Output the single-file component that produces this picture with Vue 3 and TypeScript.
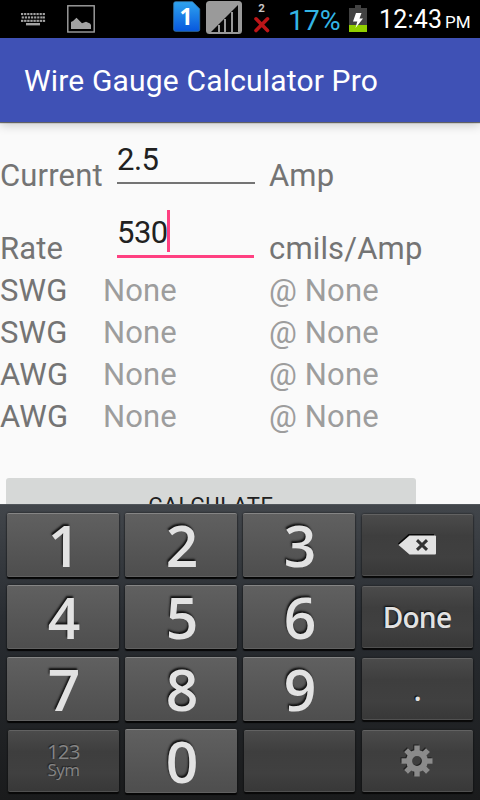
<script setup lang="ts">
import { ref } from 'vue'

interface Result { label: string; gauge: string; at: string }
interface Key { id: string; label?: string; kind: 'digit' | 'func' }

const current = ref('2.5')
const rate = ref('530')
const results: Result[] = [
  { label: 'SWG', gauge: 'None', at: '@ None' },
  { label: 'SWG', gauge: 'None', at: '@ None' },
  { label: 'AWG', gauge: 'None', at: '@ None' },
  { label: 'AWG', gauge: 'None', at: '@ None' },
]
const digit = (d: string): Key => ({ id: d, label: d, kind: 'digit' })
const func = (id: string): Key => ({ id, kind: 'func' })
const keys: Key[] = [
  digit('1'), digit('2'), digit('3'), func('delete'),
  digit('4'), digit('5'), digit('6'), func('done'),
  digit('7'), digit('8'), digit('9'), func('dot'),
  func('sym'), digit('0'), func('blank'), func('settings'),
]
const teeth = [0, 45, 90, 135, 180, 225, 270, 315]
const keyDots = [21.2, 24.3, 27.4, 30.5, 33.6, 36.7, 39.8, 42.9]
</script>

<template>
  <div class="screen">
    <header class="status">
      <svg class="status-icons" width="280" height="38" viewBox="0 0 280 38">
        <g fill="#a2a2a2">
          <template v-for="x in keyDots" :key="x">
            <rect :x="x - 0.2" y="13" width="2.2" height="2.1" />
            <rect :x="x + (x > 40 ? -0.2 : 0.5)" y="16.4" width="2.2" height="2.1" />
            <rect :x="x - 0.2" y="19.8" width="2.4" height="2.1" />
          </template>
          <rect x="26" y="23" width="14" height="2.4" />
        </g>
        <rect x="67.8" y="5.8" width="26.4" height="26.2" fill="none" stroke="#a2a2a2" stroke-width="1.4" />
        <path d="M71 29v-7l2-1 3.500-3.200 5.500 5.400 4-1.500 4 1.800 1 1.500v4z" fill="#a2a2a2" />
        <defs>
          <linearGradient id="sim" x1="0" y1="0" x2="0" y2="1">
            <stop offset="0" stop-color="#2fa4ee" /><stop offset="1" stop-color="#0757de" />
          </linearGradient>
        </defs>
        <path d="M175.500 1.700h17l7.200 7.200v20.600q0 1.800-1.800 1.800h-22.400q-1.800 0-1.800-1.800v-26q0-1.800 1.800-1.800z" fill="url(#sim)" stroke="#397bb0" stroke-width=".8" />
        <text x="179.400" y="24.600" class="sim-number">1</text>
        <rect x="206" y="1" width="36" height="33" rx="3.500" fill="#9a9a9a" />
        <path d="M211 32L238 5v27z" fill="#050505" />
        <path d="M219 25v7M225 19v13M232 12v20" stroke="#9a9a9a" stroke-width="2" />
        <text x="261.600" y="12" text-anchor="middle" class="signal-number">2</text>
        <path d="M256 18.800L267.500 30.500M267.500 18.800L256 30.500" stroke="#bc1518" stroke-width="3.600" stroke-linecap="round" />
      </svg>
      <span class="percent">17%</span>
      <svg class="battery" width="18" height="28" viewBox="0 0 18 28">
        <path d="M6 0h6v3h6v24H0V3h6z" fill="#424242" />
        <path d="M0 20h18v7H0z" fill="#91cf00" />
        <path d="M7 8h5.500l-2 5.500h3.500L6.500 23l1.800-6.500H4z" fill="#fff" />
      </svg>
      <span class="clock">12:43</span>
      <span class="meridiem">PM</span>
    </header>

    <div class="appbar"><h1>Wire Gauge Calculator Pro</h1></div>

    <main class="form">
      <div class="row field-row">
        <label>Current</label>
        <div class="field"><span>{{ current }}</span></div>
        <span>Amp</span>
      </div>
      <div class="row field-row rate">
        <label>Rate</label>
        <div class="field"><span>{{ rate }}</span><i class="caret"></i></div>
        <span>cmils/Amp</span>
      </div>
      <div v-for="(r, i) in results" :key="i" class="row">
        <span>{{ r.label }}</span>
        <span class="hint">{{ r.gauge }}</span>
        <span class="hint">{{ r.at }}</span>
      </div>
      <button class="calculate">CALCULATE</button>
    </main>

    <section class="keyboard">
      <div v-for="k in keys" :key="k.id" class="key" :class="[k.kind, 'key-' + k.id]">
        <span v-if="k.label">{{ k.label }}</span>
        <svg v-else-if="k.id === 'delete'" class="delete" width="42" height="26" viewBox="0 0 42 26">
          <path d="M2 11.500L12.500 2H38v2H13.500L3 13z" fill="#080808" />
          <path d="M2.500 13L13.500 3.500H39Q40 3.500 40 4.500V21.500Q40 22.500 39 22.500H13.500z" fill="#e2e2e2" />
          <path d="M21 8.200L31 17.800M31 8.200L21 17.800" stroke="#333" stroke-width="3" />
        </svg>
        <span v-else-if="k.id === 'done'" class="done">Done</span>
        <span v-else-if="k.id === 'dot'" class="dot">.</span>
        <span v-else-if="k.id === 'sym'" class="sym"><b>123</b><b>Sym</b></span>
        <svg v-else-if="k.id === 'settings'" class="settings" width="36" height="36" viewBox="-18 -18 36 36">
          <g v-for="layer in 2" :key="layer" :class="layer === 1 ? 'gear-shadow' : 'gear'">
            <path v-for="a in teeth" :key="a" d="M-2.700 -15.500h5.400v7h-5.400z" :transform="`rotate(${a})`" />
            <circle r="7.900" fill="none" stroke-width="6" />
          </g>
        </svg>
      </div>
    </section>
  </div>
</template>

<style>
body { margin: 0; overflow: hidden; }
</style>

<style scoped>
.screen { width: 480px; height: 800px; display: flex; flex-direction: column; overflow: hidden; background: #fafafa; font-family: Roboto, sans-serif; color: #747474; }
.status { height: 38px; flex: none; display: flex; background: #000; color: #fff; line-height: 38px; white-space: nowrap; }
.status-icons { flex: none; }
.sim-number { font: bold 23px "Noto Sans", sans-serif; fill: #fff; }
.signal-number { font: bold 11.500px Roboto, sans-serif; fill: #c4c4c4; }
.percent { width: 60px; padding-left: 8px; box-sizing: border-box; color: #33b5e5; font-size: 28.500px; line-height: 41px; letter-spacing: -.2px; }
.battery { margin: 5px 12px 0 9px; flex: none; }
.clock { width: 66px; font-size: 25px; letter-spacing: .2px; line-height: 40px; }
.meridiem { font-size: 17px; line-height: 44px; }
.appbar { height: 84px; flex: none; box-sizing: border-box; background: #3f51b5; box-shadow: 0 1px 1px rgba(0,0,0,.55), 0 3px 10px rgba(0,0,0,.2); display: flex; align-items: center; padding: 2px 0 0 24px; z-index: 1; }
h1 { margin: 0; color: #fff; font-size: 30px; font-weight: 400; line-height: 36px; letter-spacing: .17px; white-space: nowrap; }
.form { height: 382px; flex: none; overflow: hidden; padding-top: 17px; box-sizing: border-box; font-size: 31px; line-height: 42px; letter-spacing: .15px; white-space: nowrap; }
.row { display: grid; grid-template-columns: 103px 166px 1fr; height: 42px; }
.field-row { height: 58px; grid-template-columns: 117px 152px 1fr; align-items: end; }
.field-row.rate { height: 73px; }
.field { align-self: start; width: 138px; height: 43px; border-bottom: 2px solid #747474; color: #212121; display: flex; letter-spacing: -.5px; }
.rate .field { margin-top: 15px; width: 137px; border-bottom: 3px solid #ff4081; }
.caret { width: 3px; height: 42px; margin: -2px 0 0 -1px; background: #ff4081; }
.hint { color: #9d9d9d; }
.calculate { display: block; width: 410px; height: 60px; margin: 40px 0 0 6px; padding: 0 0 5px; border: 0; border-radius: 3px; background: #d6d8d7; color: #212121; font: 22px/50px Roboto, sans-serif; letter-spacing: .7px; }
.keyboard { flex: 1; box-sizing: border-box; border-top: 1px solid #51565b; padding: 8px 6px 6px 7px; display: grid; grid-template-columns: repeat(3, 112px) 112px; grid-auto-rows: 64px; gap: 8px 6px; background: linear-gradient(#42464b, #292d32 38%, #1a1b1c); z-index: 2; color: #e2e2e2; }
.key { box-sizing: border-box; border-radius: 2px; display: flex; align-items: center; justify-content: center; font-family: "Open Sans", sans-serif; }
.digit { background: linear-gradient(#606060, #4e4e4e); border-top: 1px solid #858585; border-bottom: 1px solid #606060; box-shadow: 0 2px 1px #050505, 0 0 2px #111; font-size: 57px; font-weight: 600; line-height: 64px; text-shadow: -1px -2px 2px #111; }
.digit span { padding-left: 2px; }
.func { margin: 1px 0 1px 1px; background: linear-gradient(#4b4b4b, #3e3e3e 35%, #404040 70%, #383838); border-top: 1px solid #626262; border-bottom: 1px solid #505050; box-shadow: 0 2px 1px #080808, 0 0 2px #111; }
.delete { margin: 0 2px 1px 0; }
.settings { margin: 0 1px 1px 0; }
.done { font-size: 28px; font-weight: 600; letter-spacing: -.7px; padding-right: 1px; text-shadow: -1px -1px 2px #080808; }
.dot { font-size: 30px; font-weight: 600; text-shadow: -1px -1px 1px #080808; }
.sym { display: flex; flex-direction: column; align-items: center; color: #858585; line-height: 18px; text-shadow: -1px -1px 1px #222; }
.sym b { font-size: 20px; font-weight: 400; letter-spacing: -.6px; }
.sym b + b { font-size: 17px; letter-spacing: -.5px; }
.gear-shadow { fill: #202020; stroke: none; transform: translate(-1px, -1px); }
.gear-shadow circle { stroke: #202020; }
.gear { fill: #8b8b8b; }
.gear circle { stroke: #8b8b8b; }
</style>
